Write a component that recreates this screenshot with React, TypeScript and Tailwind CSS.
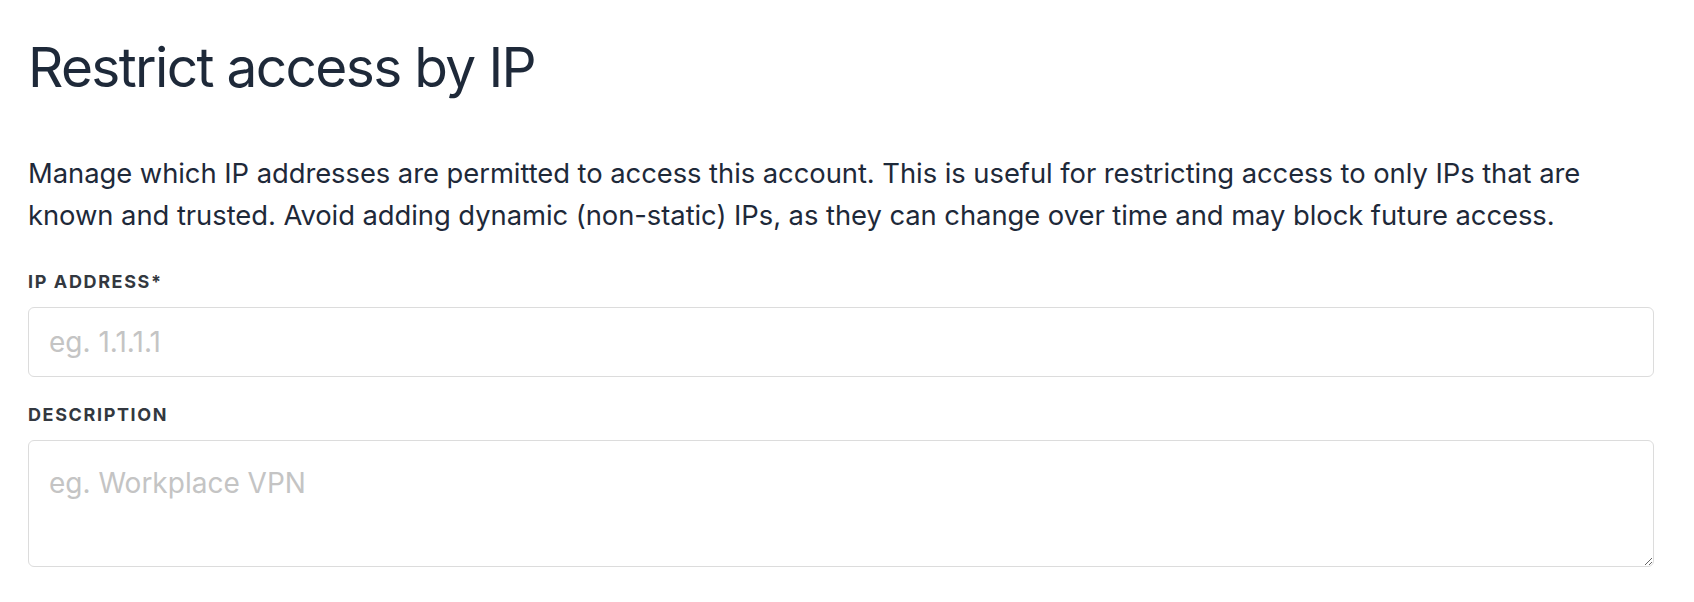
export default function App() {
  return (
    <div className="min-h-screen bg-white pl-[28px] pr-[40px] pt-[40px] font-['Inter','Liberation_Sans',sans-serif] text-[#1e2939]">
      <h1 className="text-[55px] font-normal leading-none tracking-[-0.03em]">Restrict access by IP</h1>

      <p className="mt-[57px] text-[27.4px] leading-[42px] tracking-[-0.002em]">
        Manage which IP addresses are permitted to access this account. This is useful for restricting access to only IPs that are
        <br />
        known and trusted. Avoid adding dynamic (non-static) IPs, as they can change over time and may block future access.
      </p>

      <form className="mt-[37px] flex flex-col">
        <label htmlFor="ip" className="text-[18px] font-bold uppercase leading-none tracking-[0.09em] text-[#333840]">
          IP Address*
        </label>
        <input
          id="ip"
          type="text"
          placeholder="eg. 1.1.1.1"
          className="mt-[16px] h-[70px] w-full rounded-[6px] border border-[#dcdcdc] bg-white px-[20px] text-[28px] text-[#1e2939] outline-none placeholder:text-[#c4c4c4]"
        />

        <label htmlFor="desc" className="mt-[29px] text-[18px] font-bold uppercase leading-none tracking-[0.09em] text-[#333840]">
          Description
        </label>
        <textarea
          id="desc"
          placeholder="eg. Workplace VPN"
          className="mt-[16px] h-[127px] w-full rounded-[6px] border border-[#dcdcdc] bg-white px-[20px] pt-[21px] text-[28px] leading-[42px] text-[#1e2939] outline-none placeholder:text-[#c4c4c4]"
        />
      </form>
    </div>
  );
}
